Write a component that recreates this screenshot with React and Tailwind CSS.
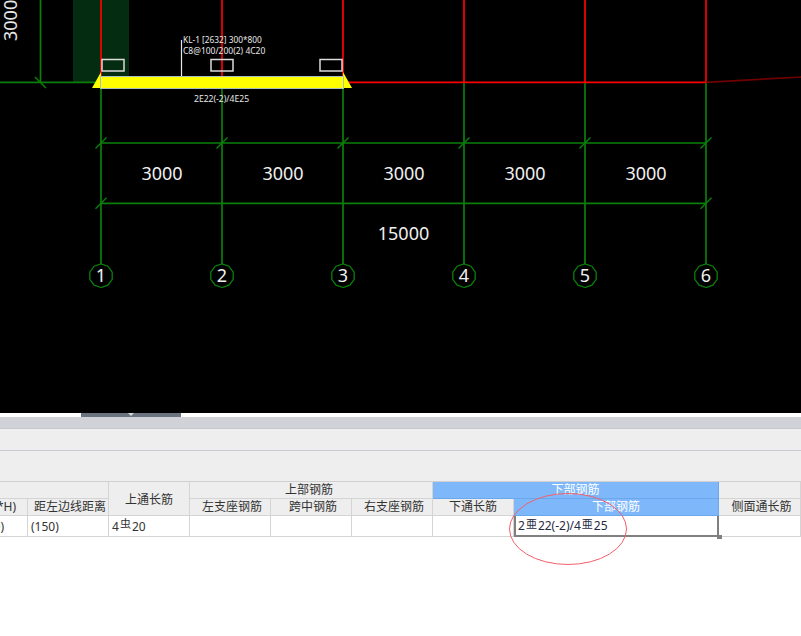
const cjk = { fontFamily: '"Noto Sans", "Noto Sans CJK SC", sans-serif' };

const axes = [101, 222, 343, 464, 585, 706];
const lineW = 1.7;

function Tick({ x, y, color = '#0a7f0a' }) {
  return <line x1={x - 5.5} y1={y + 5.5} x2={x + 5.5} y2={y - 5.5} stroke={color} strokeWidth="1.5" />;
}

function bubble(cx, cy, r) {
  const pts = [];
  for (let i = 0; i < 10; i++) {
    const a = (Math.PI * 2 * i) / 10 + Math.PI / 2;
    pts.push(`${(cx + r * Math.cos(a)).toFixed(1)},${(cy + r * Math.sin(a)).toFixed(1)}`);
  }
  return pts.join(' ');
}

function Drawing() {
  const green = '#0a7f0a';
  const red = '#ff0000';
  return (
    <svg width="801" height="413" viewBox="0 0 801 413" className="block bg-black" style={cjk}>
      {/* column fill */}
      <rect x="73" y="0" width="56" height="82" fill="#042c10" />

      {/* left dimension */}
      <line x1="40.5" y1="0" x2="40.5" y2="82" stroke={green} strokeWidth={lineW} />
      <line x1="0" y1="82.3" x2="101" y2="82.3" stroke={green} strokeWidth={lineW} />
      <line x1="35" y1="77" x2="46" y2="88" stroke={green} strokeWidth="1.5" />
      <text transform="translate(17,41) rotate(-90)" fill="#e8e8e8" fontSize="18">3000</text>

      {/* red beam lines */}
      {axes.map((x, i) => (
        <line key={x} x1={x} y1="0" x2={x} y2={i < 3 ? 76 : 83} stroke={red} strokeWidth={lineW} />
      ))}
      <line x1="345" y1="82.3" x2="706" y2="82.3" stroke={red} strokeWidth={lineW} />
      <line x1="706" y1="82.3" x2="801" y2="77" stroke="#6e0000" strokeWidth={lineW} />

      {/* axis lines */}
      {axes.map((x) => (
        <line key={x} x1={x} y1={x < 344 ? 89 : 83} x2={x} y2="264" stroke={green} strokeWidth={lineW} />
      ))}

      {/* dimensions */}
      <line x1="101" y1="143" x2="706" y2="143" stroke={green} strokeWidth={lineW} />
      <line x1="101" y1="203.3" x2="706" y2="203.3" stroke={green} strokeWidth={lineW} />
      {axes.map((x) => <Tick key={x} x={x} y={143} />)}
      <Tick x={101} y={203.3} />
      <Tick x={706} y={203.3} />
      {[162, 283, 404, 525, 646].map((x) => (
        <text key={x} x={x} y="179.5" fill="#f0f0f0" fontSize="18" textAnchor="middle">3000</text>
      ))}
      <text x="403.5" y="240" fill="#f0f0f0" fontSize="18" textAnchor="middle">15000</text>

      {/* axis bubbles */}
      {axes.map((x, i) => (
        <g key={x}>
          <polygon points={bubble(x, 275.7, 11.8)} fill="none" stroke={green} strokeWidth="1.3" />
          <text x={x} y="282" fill="#f0f0f0" fontSize="18" textAnchor="middle">{i + 1}</text>
        </g>
      ))}

      {/* beam */}
      <polygon points="92,88 101,72 101,88" fill="#ffff00" />
      <polygon points="343,72 352,88 343,88" fill="#ffff00" />
      <rect x="100.5" y="76.5" width="243" height="12" fill="#ffff00" stroke="#a8c0c0" strokeWidth="1" />

      {/* rebar marks */}
      {[102, 211, 320].map((x) => (
        <rect key={x} x={x} y="59.5" width="22" height="11.5" fill="none" stroke="#dcdcdc" strokeWidth="1.5" />
      ))}
      <line x1="181.5" y1="40" x2="181.5" y2="76" stroke="#e8e8e8" strokeWidth="1.2" />
      <text x="183" y="43" fill="#e8e8e8" fontSize="8.3">KL-1 [2632] 300*800</text>
      <text x="183" y="54" fill="#e8e8e8" fontSize="8.5">C8@100/200(2) 4C20</text>
      <text x="194" y="102" fill="#e8e8e8" fontSize="8.6">2E22(-2)/4E25</text>
    </svg>
  );
}

function Head({ blue, className = '', children }) {
  const tone = blue
    ? 'border-[#6aa8ee] bg-[#7eb8fb] text-white'
    : 'border-[#d4d4d4] bg-[#eeeeee] text-[#333333]';
  return (
    <div className={`flex items-center justify-center overflow-hidden whitespace-nowrap border-r border-b text-[12px] ${tone} ${className}`}>
      {children}
    </div>
  );
}

function Cell({ className = '', children }) {
  return (
    <div className={`flex items-center overflow-hidden whitespace-nowrap border-r border-b border-[#d4d4d4] bg-white pt-[1px] text-[12px] text-[#333333] ${className}`}>
      {children}
    </div>
  );
}

function Bar({ mark }) {
  return <span className="relative top-[-2px] mx-px text-[11px]">{mark}</span>;
}

function RebarTable() {
  return (
    <div className="relative">
      <div className="grid grid-cols-[28px_81px_81px_81px_81px_81px_81px_205px_82px] grid-rows-[17px_17px_21px] border-t border-[#d0d0d0]">
        <Head className="col-span-2" />
        <Head className="row-span-2 pt-[2px]">上通长筋</Head>
        <Head className="col-span-3 pr-[4px]">上部钢筋</Head>
        <Head blue className="col-span-2">下部钢筋</Head>
        <Head />

        <Head className="justify-end pr-[11px]">*H)</Head>
        <Head className="pl-[4px]">距左边线距离</Head>
        <Head className="pl-[4px]">左支座钢筋</Head>
        <Head className="pl-[4px]">跨中钢筋</Head>
        <Head className="pl-[4px]">右支座钢筋</Head>
        <Head>下通长筋</Head>
        <Head blue>下部钢筋</Head>
        <Head className="pl-[4px]">侧面通长筋</Head>

        <Cell className="justify-end pr-[23px]">0)</Cell>
        <Cell className="pl-[3px]">(150)</Cell>
        <Cell className="pl-[3px]">4<Bar mark="虫" />20</Cell>
        <Cell />
        <Cell />
        <Cell />
        <Cell />
        <div className="flex items-center overflow-hidden whitespace-nowrap border-r-2 border-b-2 border-l-2 border-[#808080] bg-white pt-[1px] pl-[2px] text-[12px] text-[#1f2a44]">
          2<Bar mark="亜" />22(-2)/4<Bar mark="亜" />25
        </div>
        <Cell />
      </div>
      {/* fill handle */}
      <div className="absolute left-[717px] top-[54px] h-[4px] w-[5px] bg-[#808080]" />
      {/* hand drawn markup */}
      <svg width="130" height="80" viewBox="0 0 130 80" className="absolute left-[503px] top-[10px]">
        <ellipse cx="65" cy="38" rx="58.5" ry="35.5" fill="none" stroke="#f0606c" strokeWidth="1" />
      </svg>
    </div>
  );
}

export default function App() {
  return (
    <div className="h-[636px] w-[801px] overflow-hidden bg-white" style={cjk}>
      <Drawing />
      <div className="flex h-[4px] justify-start bg-white pl-[81px]">
        <div className="flex h-full w-[100px] justify-center bg-[#6b7280]">
          <div className="h-0 w-0 border-x-[3px] border-t-[3px] border-x-transparent border-t-[#d8d8d8]" />
        </div>
      </div>
      <div className="h-[12px] border-b border-[#c4c6cc] bg-[#d0d2d8]" />
      <div className="h-[22px] border-b border-[#c8c8d0] bg-[#eeeeee]" />
      <div className="h-[30px] bg-[#eeeeee]" />
      <RebarTable />
    </div>
  );
}
